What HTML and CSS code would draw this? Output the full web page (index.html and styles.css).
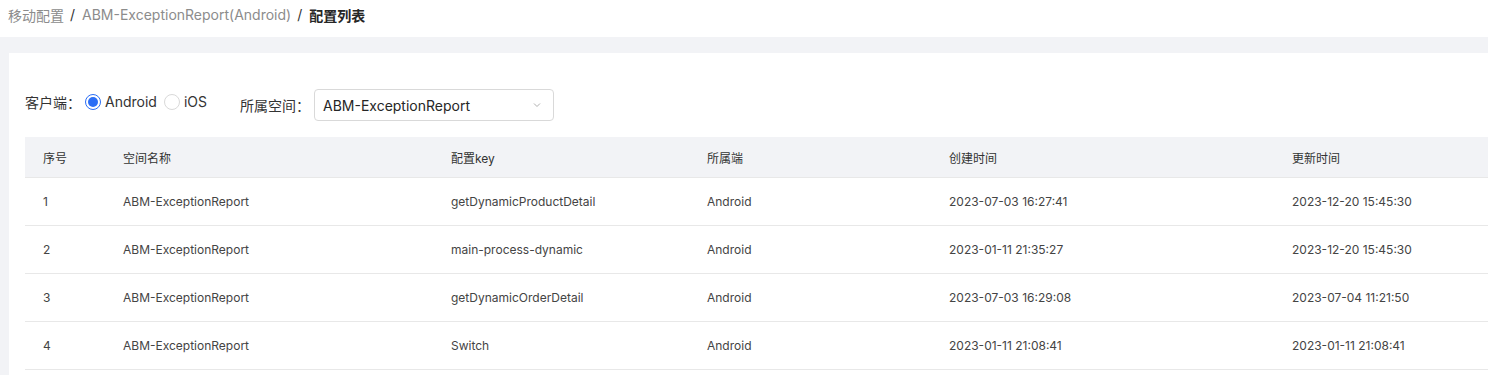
FILE: index.html
```html
<!DOCTYPE html>
<html>
<head>
  <meta charset="UTF-8">
  <title>配置列表</title>
  <link rel="stylesheet" href="styles.css">
</head>
<body>
  <div class="breadcrumb">
    <span class="crumb">移动配置</span>
    <span class="sep">/</span>
    <span class="crumb">ABM-ExceptionReport(Android)</span>
    <span class="sep">/</span>
    <span class="crumb current">配置列表</span>
  </div>

  <div class="main">
    <div class="card">
      <div class="filters">
        <div class="field client">
          <span class="label">客户端：</span>
          <label class="radio checked"><span class="dot"></span>Android</label>
          <label class="radio"><span class="dot"></span>iOS</label>
        </div>
        <div class="field">
          <span class="label">所属空间：</span>
          <div class="select">
            <span>ABM-ExceptionReport</span>
            <svg class="arrow" width="12" height="12" viewBox="0 0 12 12"><path d="M3 4.5 L6 7.5 L9 4.5" fill="none" stroke="#b0b0b0" stroke-width="1"/></svg>
          </div>
        </div>
      </div>

      <table class="list">
        <colgroup>
          <col style="width:80px">
          <col style="width:328px">
          <col style="width:256px">
          <col style="width:242px">
          <col style="width:343px">
          <col>
        </colgroup>
        <thead>
          <tr>
            <th>序号</th>
            <th>空间名称</th>
            <th>配置key</th>
            <th>所属端</th>
            <th>创建时间</th>
            <th>更新时间</th>
          </tr>
        </thead>
        <tbody>
          <tr>
            <td>1</td>
            <td>ABM-ExceptionReport</td>
            <td>getDynamicProductDetail</td>
            <td>Android</td>
            <td>2023-07-03 16:27:41</td>
            <td>2023-12-20 15:45:30</td>
          </tr>
          <tr>
            <td>2</td>
            <td>ABM-ExceptionReport</td>
            <td>main-process-dynamic</td>
            <td>Android</td>
            <td>2023-01-11 21:35:27</td>
            <td>2023-12-20 15:45:30</td>
          </tr>
          <tr>
            <td>3</td>
            <td>ABM-ExceptionReport</td>
            <td>getDynamicOrderDetail</td>
            <td>Android</td>
            <td>2023-07-03 16:29:08</td>
            <td>2023-07-04 11:21:50</td>
          </tr>
          <tr>
            <td>4</td>
            <td>ABM-ExceptionReport</td>
            <td>Switch</td>
            <td>Android</td>
            <td>2023-01-11 21:08:41</td>
            <td>2023-01-11 21:08:41</td>
          </tr>
        </tbody>
      </table>
    </div>
  </div>
</body>
</html>
```

FILE: styles.css
```css
body {
  margin: 0;
  font-family: Inter, "Noto Sans CJK SC", sans-serif;
  color: #333;
  background: #fff;
  overflow: hidden;
}

.breadcrumb {
  height: 37px;
  padding-left: 8px;
  display: flex;
  align-items: center;
  font-size: 14px;
  color: #8c8c8c;
  padding-bottom: 8px;
  box-sizing: border-box;
}

.sep {
  margin: 0 7px 0 6px;
  color: #333;
}

.current {
  color: #262626;
  font-weight: bold;
}

.main {
  background: #f2f3f6;
  padding: 16px 0 0 9px;
  min-height: 400px;
}

.card {
  background: #fff;
  padding: 36px 0 0 16px;
  min-height: 360px;
}

.filters {
  display: flex;
  align-items: center;
  height: 32px;
  gap: 26px;
  font-size: 14px;
}

.field {
  display: flex;
  align-items: center;
}

.client {
  padding-bottom: 7px;
}

.label {
  color: #333;
  margin-right: 4px;
}

.radio {
  display: flex;
  align-items: center;
  margin-right: 7px;
  color: #333;
}

.dot {
  width: 14px;
  height: 14px;
  border: 1px solid #d9d9d9;
  border-radius: 50%;
  margin-right: 4px;
  box-sizing: content-box;
  position: relative;
}

.checked .dot {
  border-color: #2b6ef5;
}

.checked .dot::after {
  content: "";
  position: absolute;
  left: 2px;
  top: 2px;
  width: 10px;
  height: 10px;
  border-radius: 50%;
  background: #2b6ef5;
}

.select {
  width: 240px;
  height: 32px;
  box-sizing: border-box;
  border: 1px solid #d9d9d9;
  border-radius: 4px;
  display: flex;
  align-items: center;
  justify-content: space-between;
  padding: 0 10px 0 8px;
  color: #262626;
}

.list {
  margin-top: 16px;
  width: 1463px;
  border-collapse: collapse;
  table-layout: fixed;
  font-size: 12px;
}

.list th {
  background: #f2f3f6;
  height: 40px;
  font-weight: normal;
  text-align: left;
  color: #333;
  padding: 0 0 0 18px;
  border-bottom: 1px solid #e8e8e8;
}

.list td {
  height: 47px;
  padding: 0 0 0 18px;
  color: #444;
  border-bottom: 1px solid #e8e8e8;
}
```
